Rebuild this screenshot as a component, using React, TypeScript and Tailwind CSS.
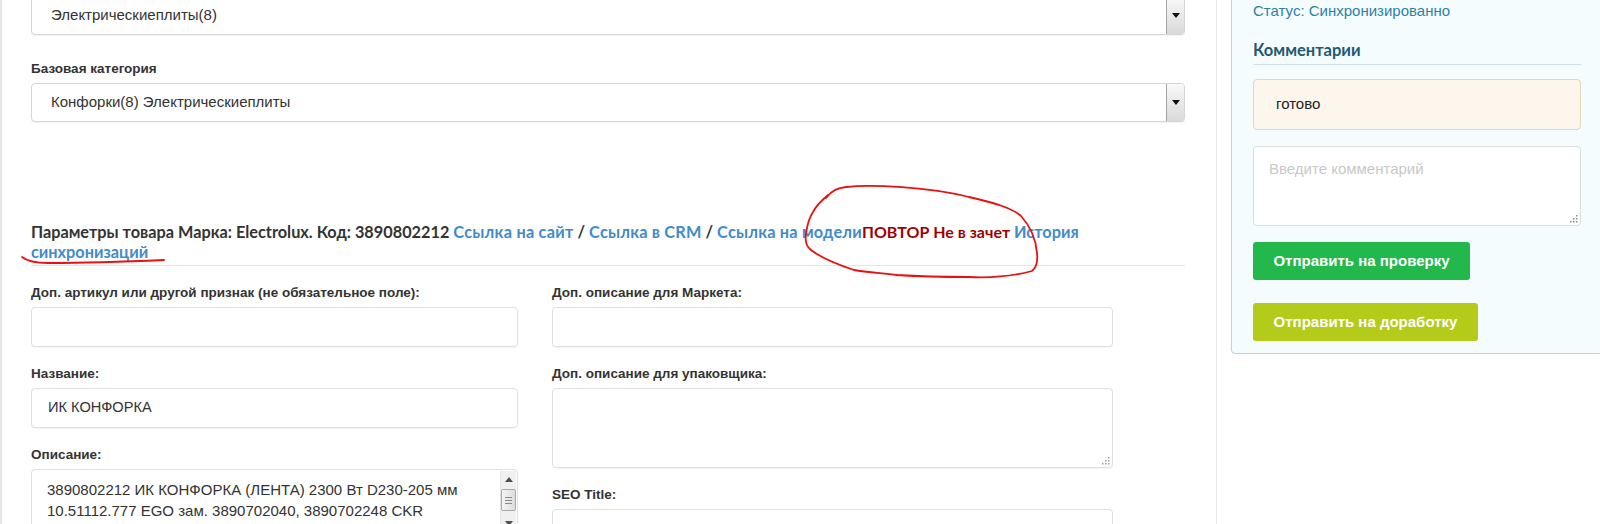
import React from "react";

const Arrow = () => (
  <div className="h-full w-[18px] shrink-0 rounded-r-[3px] border-l border-[#a5a5a5] bg-gradient-to-b from-[#f9f9f9] to-[#d9d9d9] flex items-center justify-center">
    <svg width="8" height="5" viewBox="0 0 8 5">
      <polygon points="0,0 8,0 4,5" fill="#111" />
    </svg>
  </div>
);

const SelectBox = ({ text }: { text: string }) => (
  <div className="h-[39px] w-full rounded-[4px] border border-[#d6d6d6] bg-white shadow-[0_1px_1px_rgba(0,0,0,0.05)] flex items-center">
    <span className="pl-[19px] text-[15px] text-[#333] flex-1">{text}</span>
    <Arrow />
  </div>
);

const Label = ({ children }: { children: React.ReactNode }) => (
  <div className="text-[13.5px] leading-[18px] font-bold text-[#333] mb-[5px]">{children}</div>
);

const Input = ({ value }: { value?: string }) => (
  <div className="h-[40px] relative rounded-[4px] border border-[#e0e0e0] bg-white shadow-[0_1px_1px_rgba(0,0,0,0.04)] flex items-center px-[16px] text-[14.6px] text-[#333]">
    {value}
  </div>
);

const ResizeGrip = ({ color = "#9a9a9a" }: { color?: string }) => (
  <svg className="absolute right-[2px] bottom-[2px]" width="8" height="8" viewBox="0 0 8 8">
    <rect x="6" y="0" width="1.5" height="1.5" fill={color} />
    <rect x="3" y="3" width="1.5" height="1.5" fill={color} />
    <rect x="6" y="3" width="1.5" height="1.5" fill={color} />
    <rect x="0" y="6" width="1.5" height="1.5" fill={color} />
    <rect x="3" y="6" width="1.5" height="1.5" fill={color} />
    <rect x="6" y="6" width="1.5" height="1.5" fill={color} />
  </svg>
);

const TextArea80 = () => (
  <div className="h-[80px] relative rounded-[4px] border border-[#e0e0e0] bg-white shadow-[0_1px_1px_rgba(0,0,0,0.04)]">
    <ResizeGrip />
  </div>
);

export default function App() {
  return (
    <div className="relative w-[1600px] h-[524px] overflow-hidden bg-white flex font-['Liberation_Sans',Arial,sans-serif] text-[#333]">
      <main className="w-[1217px] shrink-0 border-l-2 border-r border-l-[#e6e6e6] border-r-[#e8e8e8] pl-[29px] pr-[31px]">
        <div className="-mt-[4px]">
          <SelectBox text="Электрическиеплиты(8)" />
        </div>
        <div className="mt-[25px]">
          <Label>Базовая категория</Label>
          <SelectBox text="Конфорки(8) Электрическиеплиты" />
        </div>

        <div className="mt-[100px] text-[16.3px] leading-[20px] font-bold font-['Lato','Liberation_Sans',sans-serif] text-[#333]">
          <span>Параметры товара</span> <span>Марка: Electrolux. Код: 3890802212</span>{" "}
          <span className="text-[#428bca] tracking-[0.25px]">Ссылка на сайт</span> /{" "}
          <span className="text-[#428bca] tracking-[0.2px]">Ссылка в CRM</span> /{" "}
          <span className="text-[#428bca] tracking-[0.2px]">Ссылка на модели</span>
          <span className="text-[#a00000] text-[16px]">ПОВТОР Не в зачет</span>{" "}
          <span className="text-[#428bca]">История</span>
          <br />
          <span className="text-[#428bca]">синхронизаций</span>
        </div>
        <div className="mt-[3px] border-t border-[#e5e5e5]" />

        <div className="mt-[18px] flex">
          <div className="w-[487px] shrink-0">
            <Label>Доп. артикул или другой признак (не обязательное поле):</Label>
            <Input />
            <div className="mt-[18px]">
              <Label>Название:</Label>
              <Input value="ИК КОНФОРКА" />
            </div>
            <div className="mt-[18px]">
              <Label>Описание:</Label>
              <div className="h-[110px] relative rounded-[4px] border border-[#e0e0e0] bg-white overflow-hidden">
                <div className="pl-[15px] pt-[9px] pr-[24px] text-[15px] leading-[21px] text-[#333]">
                  <div>3890802212 ИК КОНФОРКА (ЛЕНТА) 2300 Вт D230-205 мм</div>
                  <div>10.51112.777 EGO зам. 3890702040, 3890702248 CKR</div>
                  <div>HEATING ELEMENT</div>
                </div>
                <div className="absolute right-[1px] top-[1px] bottom-0 w-[16px] bg-[#f0f0f0] border-l border-[#e4e4e4]">
                  <svg className="absolute left-[4px] top-[6px]" width="8" height="5" viewBox="0 0 8 5">
                    <polygon points="4,0 8,5 0,5" fill="#505050" />
                  </svg>
                  <div className="absolute left-0 top-[18px] w-[15px] h-[22px] rounded-[2px] border border-[#a8a8a8] bg-gradient-to-r from-[#f4f4f4] to-[#dcdcdc] flex flex-col items-center justify-center gap-[2px]">
                    <div className="w-[7px] h-[1px] bg-[#8a8a8a]" />
                    <div className="w-[7px] h-[1px] bg-[#8a8a8a]" />
                    <div className="w-[7px] h-[1px] bg-[#8a8a8a]" />
                  </div>
                  <svg className="absolute left-[4px] top-[50px]" width="8" height="5" viewBox="0 0 8 5">
                    <polygon points="0,0 8,0 4,5" fill="#505050" />
                  </svg>
                </div>
              </div>
            </div>
          </div>
          <div className="w-[561px] shrink-0 ml-[34px]">
            <Label>Доп. описание для Маркета:</Label>
            <Input />
            <div className="mt-[18px]">
              <Label>Доп. описание для упаковщика:</Label>
              <TextArea80 />
            </div>
            <div className="mt-[18px]">
              <Label>SEO Title:</Label>
              <Input />
            </div>
          </div>
        </div>
      </main>

      <aside className="pl-[14px] shrink-0">
        <div className="w-[372px] -mt-[11px] border border-[#a9dae5] rounded-b-[4px] bg-[#f5fcfe] pl-[21px] pr-[21px] pt-[11px] pb-[12px]">
          <div className="text-[15px] leading-[20px] text-[#2d82a3]">Статус: Синхронизированно</div>
          <div className="mt-[18px] pb-[3px] border-b border-[#cfe2e9] text-[16.5px] leading-[22px] font-bold text-[#1d5a73] font-['Lato','Liberation_Sans',sans-serif]">
            Комментарии
          </div>
          <div className="mt-[14px] h-[51px] rounded-[4px] border border-[#e8d5b5] bg-[#fdf6ec] flex items-center pl-[22px] text-[15px] text-[#222]">
            готово
          </div>
          <div className="mt-[16px] h-[80px] relative rounded-[4px] border border-[#dcdcdc] bg-white pl-[15px] pt-[11px] text-[15px] text-[#c8c8c8]">
            Введите комментарий
            <ResizeGrip color="#8a8a8a" />
          </div>
          <div className="mt-[16px] h-[38px] w-[217px] rounded-[3px] bg-[#22b84b] text-white font-bold text-[15px] flex items-center justify-center">
            Отправить на проверку
          </div>
          <div className="mt-[23px] h-[38px] w-[225px] rounded-[3px] bg-[#b4cb1a] text-white font-bold text-[15px] flex items-center justify-center">
            Отправить на доработку
          </div>
        </div>
      </aside>

      <svg className="absolute left-0 top-0 pointer-events-none" width="1600" height="524" viewBox="0 0 1600 524">
        <path
          d="M826 198 C832 190 838 188 846 187 C870 184 930 187 969 197 C995 203 1012 208 1021 216 C1030 226 1036 240 1037 253 C1038 262 1036 268 1032 271 C1010 277 990 278 969 277 C940 277 912 276 897 275 C880 273 866 272 854 270 C836 264 820 257 811 250 C806 246 805 240 806 234 C807 226 809 218 813 212 C816 206 821 201 828 195"
          fill="none"
          stroke="#e81010"
          strokeWidth="1.8"
          strokeLinecap="round"
        />
        <path
          d="M22 257 C28 262 36 263 48 263 C80 263 120 262 164 260"
          fill="none"
          stroke="#e81010"
          strokeWidth="1.8"
          strokeLinecap="round"
        />
      </svg>
    </div>
  );
}
